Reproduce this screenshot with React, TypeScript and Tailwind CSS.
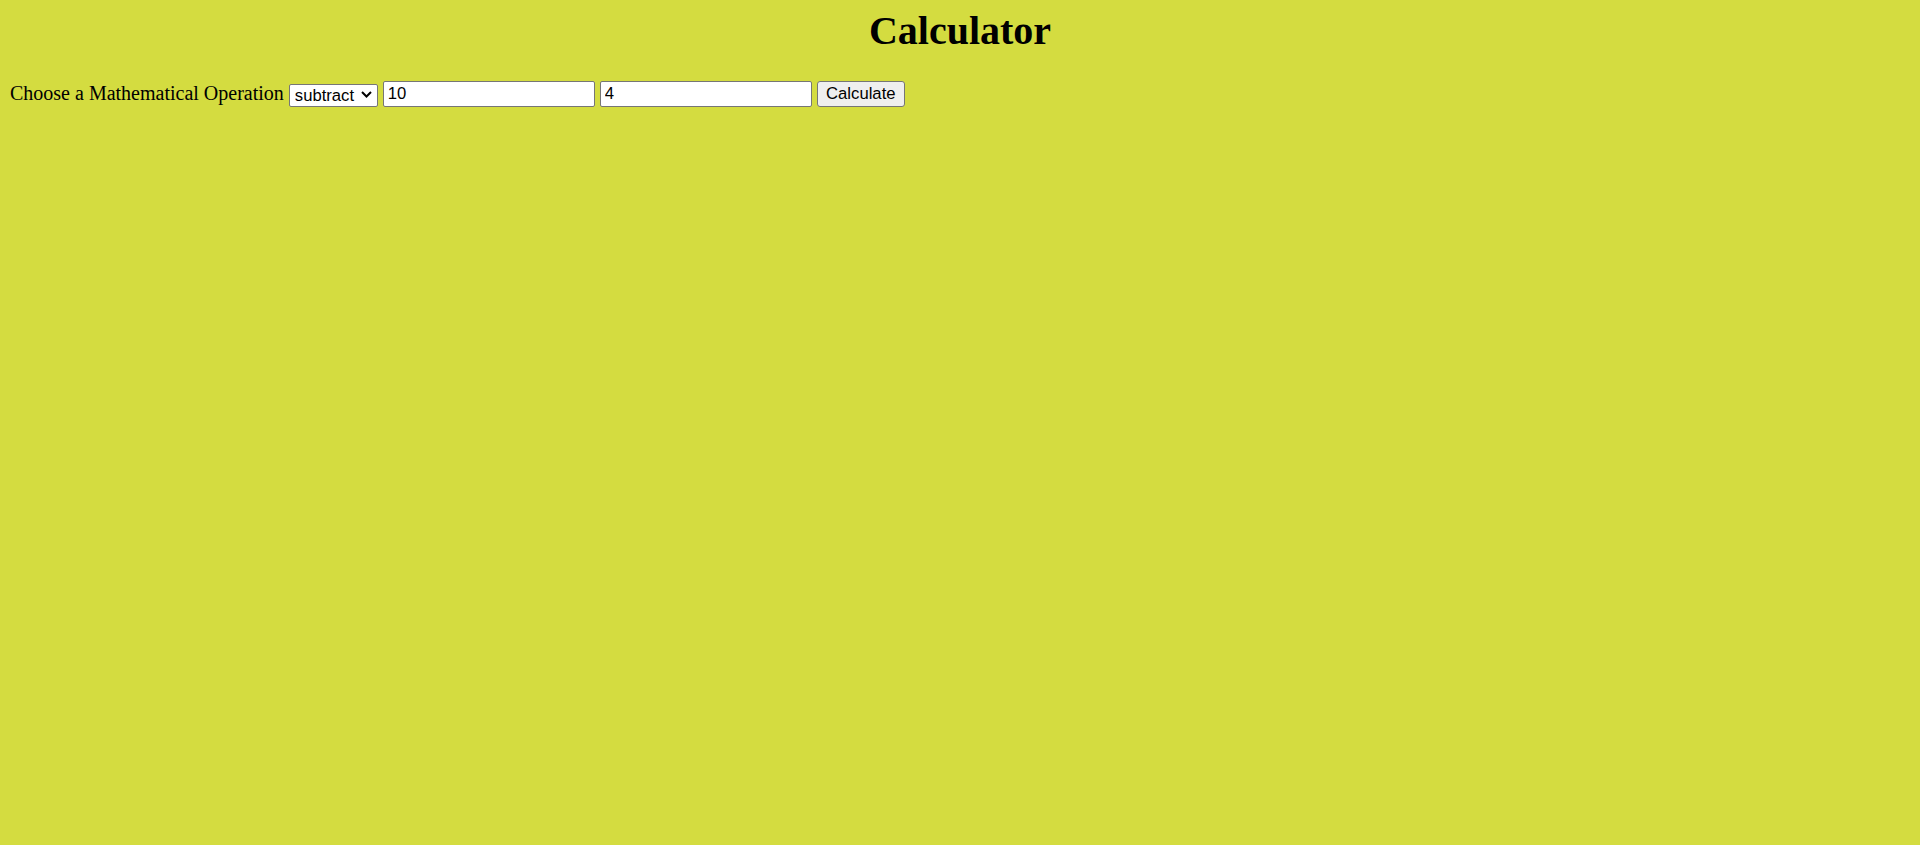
import React from "react";

const control = "font-['Liberation_Sans',Arial,sans-serif] text-[16.67px] text-black outline-none";

export default function App() {
  return (
    <div className="min-h-[845px] w-full bg-[#d4dc40] px-[10px] pt-[8px] text-black font-['Liberation_Serif','Times_New_Roman',serif]">
      <h1 className="m-0 text-center text-[40px] font-bold leading-[46px]">Calculator</h1>
      <div className="mt-[27px] flex items-center gap-[5px] text-[20px] leading-[23px]">
        <span className="-mt-[2px]">Choose a Mathematical Operation</span>
        <div className="relative h-[23px] w-[89px]">
          <select
            defaultValue="subtract"
            className={`h-full w-full appearance-none rounded-[2px] border border-[#767676] bg-white pl-[5px] pr-[16px] leading-[20px] ${control}`}
          >
            <option value="add">add</option>
            <option value="subtract">subtract</option>
            <option value="multiply">multiply</option>
            <option value="divide">divide</option>
          </select>
          <svg className="pointer-events-none absolute right-[6px] top-[8px]" width="11" height="7" viewBox="0 0 11 7" fill="none">
            <path d="M1 1 L5.5 5.5 L10 1" stroke="#000" strokeWidth="2" />
          </svg>
        </div>
        <input
          type="text"
          defaultValue="10"
          className={`h-[26px] w-[212px] rounded-[2px] border border-[#767676] bg-white px-[4px] ${control}`}
        />
        <input
          type="text"
          defaultValue="4"
          className={`h-[26px] w-[212px] rounded-[2px] border border-[#767676] bg-white px-[4px] ${control}`}
        />
        <button
          type="button"
          className={`h-[26px] w-[88px] rounded-[3px] border border-[#767676] bg-[#efefef] leading-[20px] ${control}`}
        >
          Calculate
        </button>
      </div>
    </div>
  );
}
